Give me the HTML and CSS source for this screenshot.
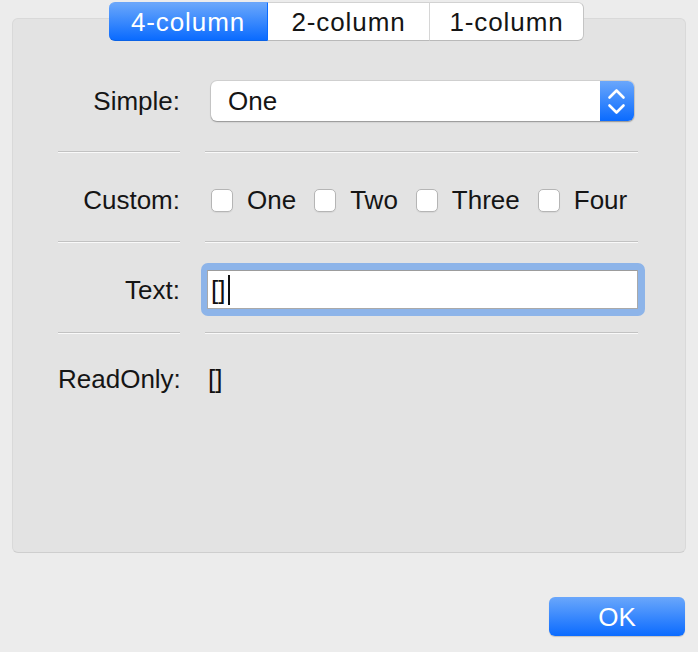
FILE: index.html
```html
<!DOCTYPE html>
<html>
<head>
<meta charset="utf-8">
<title>Form</title>
<link rel="stylesheet" href="styles.css">
</head>
<body>
<div class="window">
  <div class="tabs">
    <div class="tab tab-a selected">4-column</div>
    <div class="tab tab-b">2-column</div>
    <div class="tab tab-c">1-column</div>
  </div>
  <div class="panel">
    <div class="row row-simple">
      <div class="label">Simple:</div>
      <div class="select">
        <span class="select-value">One</span>
        <span class="stepper">
          <svg width="34" height="40" viewBox="0 0 34 40">
            <polyline points="9.5,16.5 16.5,9.5 23.5,16.5" fill="none" stroke="#fff" stroke-width="2.6" stroke-linecap="round" stroke-linejoin="round"/>
            <polyline points="9.5,24.5 16.5,31.5 23.5,24.5" fill="none" stroke="#fff" stroke-width="2.6" stroke-linecap="round" stroke-linejoin="round"/>
          </svg>
        </span>
      </div>
    </div>
    <div class="sep sep-1"><div class="line"></div><div class="line"></div></div>
    <div class="row row-custom">
      <div class="label">Custom:</div>
      <div class="checks">
        <div class="check"><span class="box"></span><span>One</span></div>
        <div class="check"><span class="box"></span><span>Two</span></div>
        <div class="check"><span class="box"></span><span>Three</span></div>
        <div class="check"><span class="box"></span><span>Four</span></div>
      </div>
    </div>
    <div class="sep sep-2"><div class="line"></div><div class="line"></div></div>
    <div class="row row-text">
      <div class="label">Text:</div>
      <div class="field-ring">
        <div class="field"><span>[]</span><span class="caret"></span></div>
      </div>
    </div>
    <div class="sep sep-3"><div class="line"></div><div class="line"></div></div>
    <div class="row row-read">
      <div class="label">ReadOnly:</div>
      <div class="readonly">[]</div>
    </div>
  </div>
  <div class="footer">
    <div class="ok">OK</div>
  </div>
</div>
</body>
</html>
```

FILE: styles.css
```css
html, body {
  margin: 0;
  padding: 0;
}
body {
  background: #ececec;
  font-family: "Liberation Sans", Arial, sans-serif;
  font-size: 26px;
  color: #151515;
  width: 698px;
  height: 652px;
  overflow: hidden;
}
.window {
  padding-top: 2px;
}
.tabs {
  display: flex;
  justify-content: center;
  position: relative;
  z-index: 1;
  height: 39px;
  margin-left: -5px;
}
.tab {
  height: 39px;
  box-sizing: border-box;
  display: flex;
  align-items: center;
  justify-content: center;
  line-height: 1;
  letter-spacing: 0.9px;
  background: #fff;
  border-top: 1px solid #d2d2d2;
  border-bottom: 1px solid #b9b9b9;
  border-right: 1px solid #d6d6d6;
  color: #151515;
}
.tab-a {
  width: 159px;
  border-radius: 6px 0 0 6px;
}
.tab-b {
  width: 162px;
}
.tab-c {
  width: 154px;
  border-radius: 0 6px 6px 0;
  border-right: 1px solid #c4c4c4;
}
.tab.selected {
  background: linear-gradient(#6aa7fb, #0a6bff);
  color: #fff;
  border-top-color: #69a5fa;
  border-bottom-color: #0a62e6;
  border-right-color: #0a6bff;
}
.panel {
  margin: -23px 12px 0;
  height: 535px;
  box-sizing: border-box;
  background: #e3e3e3;
  border: 1px solid #d9d9d9;
  border-bottom-color: #cecece;
  border-radius: 6px;
  padding: 62px 0 0 45px;
}
.row {
  display: grid;
  grid-template-columns: 122px 433px;
  column-gap: 25px;
  align-items: center;
}
.label {
  text-align: right;
  line-height: 1;
  white-space: nowrap;
}
.row-simple {
  height: 40px;
}
.sep {
  display: grid;
  grid-template-columns: 122px 433px;
  column-gap: 25px;
  height: 2px;
}
.line {
  border-top: 1px solid #c2c2c2;
  border-bottom: 1px solid #f9f9f9;
}
.sep-1 {
  margin-top: 30px;
}
.row-custom {
  height: 24px;
  margin-top: 34px;
}
.sep-2 {
  margin-top: 30px;
}
.row-text {
  height: 53px;
  margin-top: 20px;
}
.sep-3 {
  margin-top: 16px;
}
.row-read {
  height: 30px;
  margin-top: 30px;
}
.select {
  margin-left: 6px;
  width: 423px;
  height: 40px;
  box-sizing: border-box;
  background: #fff;
  border-radius: 6px;
  box-shadow: 0 0 0 1px rgba(0, 0, 0, 0.08), 0 1px 1.5px rgba(0, 0, 0, 0.3);
  display: flex;
  align-items: center;
  justify-content: space-between;
  overflow: hidden;
  line-height: 1;
}
.select-value {
  padding-left: 17px;
}
.stepper {
  width: 34px;
  height: 40px;
  display: block;
  background: linear-gradient(#6aa7fb, #0a6bff);
}
.stepper svg {
  display: block;
}
.checks {
  display: flex;
  align-items: center;
  margin-left: 6px;
  line-height: 1;
}
.check {
  display: flex;
  align-items: center;
  gap: 14px;
  margin-right: 18px;
}
.box {
  width: 22px;
  height: 23px;
  box-sizing: border-box;
  background: #fff;
  border: 1px solid #b5b5b5;
  border-radius: 5px;
  box-shadow: 0 1px 1px rgba(0, 0, 0, 0.06);
}
.field-ring {
  margin-left: -4px;
  width: 444px;
  height: 53px;
  box-sizing: border-box;
  border-radius: 7px;
  background: #8db4e9;
  padding: 7px 7px 7px 6px;
}
.field {
  height: 100%;
  box-sizing: border-box;
  background: #fff;
  border: 1px solid #a9a9a9;
  border-top-color: #9c9c9c;
  display: flex;
  align-items: center;
  padding-left: 3px;
  line-height: 1;
  color: #111;
}
.caret {
  width: 2px;
  height: 30px;
  background: #111;
  margin-left: 3px;
}
.readonly {
  margin-left: 3px;
  line-height: 1;
  color: #111;
}
.footer {
  display: flex;
  justify-content: flex-end;
  padding-right: 13px;
  margin-top: 44px;
}
.ok {
  width: 136px;
  height: 39px;
  border-radius: 6px;
  background: linear-gradient(#6aa7fb, #0b6bff);
  color: #fff;
  display: flex;
  align-items: center;
  justify-content: center;
  line-height: 1;
  box-shadow: 0 1px 1px rgba(0, 0, 0, 0.18);
}
```
